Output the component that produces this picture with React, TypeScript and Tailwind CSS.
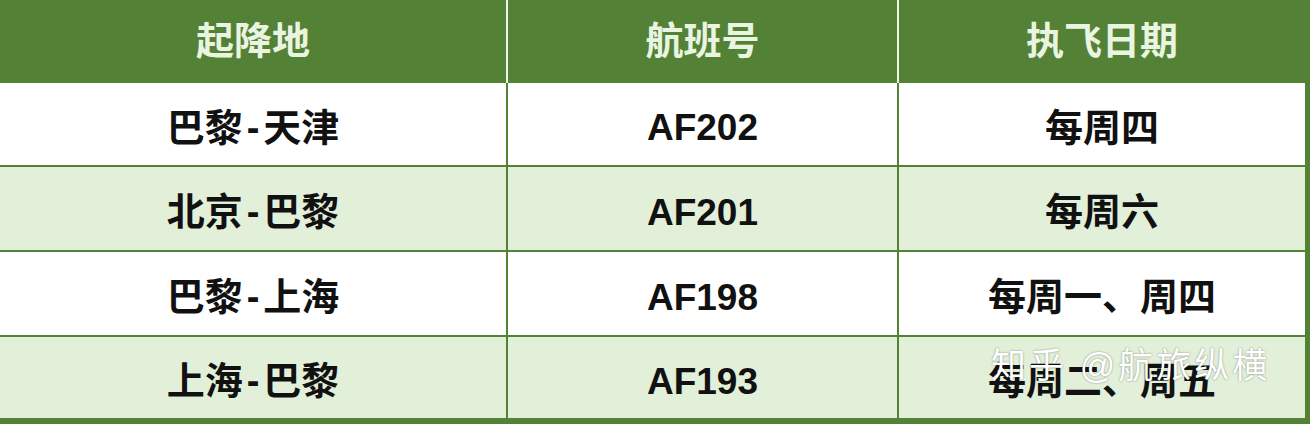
import React from "react";

const rows = [
  { from: "巴黎", to: "天津", flight: "AF202", days: "每周四", h: "h-[84px]", bg: "bg-white", last: false },
  { from: "北京", to: "巴黎", flight: "AF201", days: "每周六", h: "h-[85px]", bg: "bg-[#e2efd9]", last: false },
  { from: "巴黎", to: "上海", flight: "AF198", days: "每周一、周四", h: "h-[85px]", bg: "bg-white", last: false },
  { from: "上海", to: "巴黎", flight: "AF193", days: "每周二、周五", h: "h-[87px]", bg: "bg-[#e2efd9]", last: true },
];

export default function App() {
  return (
    <div
      className="relative w-[1310px] h-[424px] overflow-hidden bg-white"
      style={{ fontFamily: '"Liberation Sans", "Noto Sans CJK SC", sans-serif' }}
    >
      {/* header */}
      <div className="flex h-[83px] bg-[#538135] text-[#e9f4e1] text-[38px] font-bold">
        <div className="w-[508px] flex items-center justify-center border-r-2 border-[#eef5e8]">起降地</div>
        <div className="w-[391px] flex items-center justify-center border-r-2 border-[#eef5e8]">航班号</div>
        <div className="flex-1 flex items-center justify-center pr-[5px]">执飞日期</div>
      </div>

      {rows.map((r) => (
        <div
          key={r.flight}
          className={`flex ${r.h} ${r.bg} text-[#111] font-bold border-[#538135] ${
            r.last ? "border-b-[6px]" : "border-b-2"
          }`}
        >
          <div className="w-[508px] flex items-center justify-center border-r-2 border-[#538135] pt-2 text-[38px]">
            {r.from}
            <span className="mx-[4px]">-</span>
            {r.to}
          </div>
          <div className="w-[391px] flex items-center justify-center border-r-2 border-[#538135] pt-2 text-[37px]">
            {r.flight}
          </div>
          <div className="flex-1 flex items-center justify-center border-r-[5px] border-[#538135] pt-2 text-[38px]">
            {r.days}
          </div>
        </div>
      ))}

      {/* watermark */}
      <div
        className="absolute left-[991px] top-[340px] text-[35px] text-white whitespace-nowrap tracking-[3px]"
        style={{ textShadow: "0 0 2px rgba(0,0,0,0.45)" }}
      >
        知乎 @航旅纵横
      </div>
    </div>
  );
}
